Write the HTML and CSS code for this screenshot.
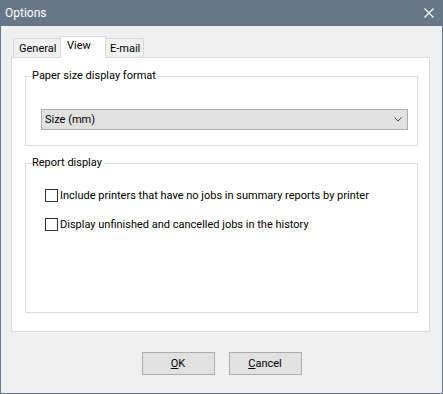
FILE: index.html
```html
<!DOCTYPE html>
<html lang="en">
<head>
    <meta charset="UTF-8">
    <meta name="viewport" content="width=device-width, initial-scale=1.0">
    <title>Options</title>

    <link rel="stylesheet" href="styles.css">
</head>
<body>
    <div class="window">
        <div class="titlebar">
            <span class="title">Options</span>
            <svg class="close" width="10" height="10" viewBox="0 0 10 10">
                <path d="M0.5 0.5 L9.5 9.5 M9.5 0.5 L0.5 9.5" stroke="#fff" stroke-width="1.1" fill="none"/>
            </svg>
        </div>

        <div class="content">
            <div class="tabs">
                <div class="tab">General</div>
                <div class="tab active">View</div>
                <div class="tab">E-mail</div>
            </div>

            <div class="panel">
                <fieldset class="group group-paper">
                    <legend>Paper size display format</legend>
                    <div class="select">
                        <span>Size (mm)</span>
                        <svg width="8" height="5" viewBox="0 0 8 5">
                            <path d="M0.5 0.5 L4 4 L7.5 0.5" stroke="#444" stroke-width="1" fill="none"/>
                        </svg>
                    </div>
                </fieldset>

                <fieldset class="group group-report">
                    <legend>Report display</legend>
                    <label class="check"><span class="box"></span>Include printers that have no jobs in summary reports by printer</label>
                    <label class="check"><span class="box"></span>Display unfinished and cancelled jobs in the history</label>
                </fieldset>
            </div>

            <div class="buttons">
                <button><u>O</u>K</button>
                <button><u>C</u>ancel</button>
            </div>
        </div>
    </div>
</body>
</html>
```

FILE: styles.css
```css
/* General Reset */
* {
    margin: 0;
    padding: 0;
    box-sizing: border-box;
}

body {
    font-family: 'Roboto', 'Liberation Sans', sans-serif;
    font-size: 11px;
    color: #000;
    background-color: #f0f0f0;
}

.window {
    width: 443px;
    height: 394px;
    display: flex;
    flex-direction: column;
    background-color: #f0f0f0;
    border: 1px solid #677689;
    border-top: none;
}

/* Title Bar */
.titlebar {
    height: 26px;
    flex-shrink: 0;
    display: flex;
    align-items: center;
    justify-content: space-between;
    background-color: #677689;
    color: #fff;
    padding: 0 9px 1px 5px;
    margin: 0 -1px;
}

.title {
    font-size: 12px;
}

/* Content */
.content {
    padding: 10px 12px 0 10px;
}

.tabs {
    display: flex;
    align-items: flex-end;
    height: 22px;
    padding-left: 2px;
    margin-bottom: -1px;
    position: relative;
    z-index: 1;
}

.tab {
    height: 19px;
    border: 1px solid #d9d9d9;
    border-bottom: none;
    background-color: #f0f0f0;
    line-height: 18px;
    padding: 1px 0 0 5px;
    margin-bottom: 1px;
}

.tab:first-child {
    width: 48px;
}

.tab.active {
    width: 46px;
    height: 22px;
    margin-left: -1px;
    margin-bottom: 0;
    background-color: #fff;
    padding: 0 0 0 6px;
    line-height: 17px;
}

.tab:last-child {
    width: 39px;
    margin-left: -1px;
    padding-left: 4px;
}

.panel {
    height: 275px;
    background-color: #fff;
    border: 1px solid #d9d9d9;
    padding: 10px 11px 0 13px;
}

/* Group Boxes */
.group {
    border: 1px solid #dcdcdc;
    padding: 0 9px 0 6px;
}

.group legend {
    padding: 0 2px 0 0;
    line-height: 16px;
}

.group-paper {
    height: 78px;
    padding-top: 25px;
}

.group-report {
    height: 158px;
    margin-top: 9px;
    padding-top: 16px;
}

.select {
    height: 21px;
    margin-left: 9px;
    display: flex;
    align-items: center;
    justify-content: space-between;
    background-color: #e1e1e1;
    border: 1px solid #adadad;
    padding: 0 5px 1px 3px;
}

.select svg {
    margin-top: 1px;
}

.check {
    display: flex;
    align-items: center;
    height: 16px;
    margin-left: 13px;
    margin-bottom: 13px;
}

.box {
    width: 13px;
    height: 13px;
    border: 1px solid #333;
    background-color: #fff;
    margin-right: 2px;
}

/* Dialog Buttons */
.buttons {
    display: flex;
    justify-content: center;
    gap: 14px;
    margin-top: 20px;
    padding-left: 2px;
}

button {
    width: 73px;
    height: 23px;
    font-family: inherit;
    font-size: 11px;
    color: #000;
    background-color: #e1e1e1;
    border: 1px solid #adadad;
}
```
